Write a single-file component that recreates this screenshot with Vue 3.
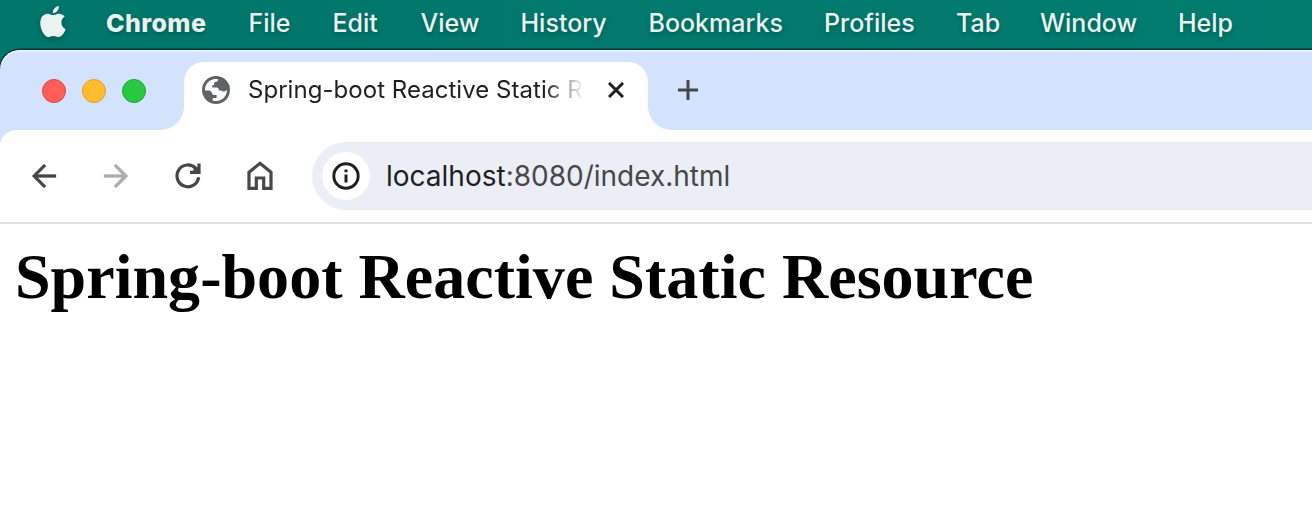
<script setup>
const menus = [
  { label: 'Chrome', width: 142.500, bold: true },
  { label: 'File', width: 84 },
  { label: 'Edit', width: 88 },
  { label: 'View', width: 100 },
  { label: 'History', width: 128 },
  { label: 'Bookmarks', width: 175.500 },
  { label: 'Profiles', width: 132 },
  { label: 'Tab', width: 84 },
  { label: 'Window', width: 138 },
  { label: 'Help', width: 70 },
]
const lights = ['red', 'yellow', 'green']
</script>

<template>
  <div class="screen">
    <header class="menubar">
      <svg class="apple" viewBox="0 0 26 32" width="26" height="32">
        <path d="M13 9.1C11.4 9.1 9.8 7.7 7.6 7.7C3.4 7.8 0.3 11.2 0.3 17C0.3 24.4 4.9 31 8.1 31C10 31 10.9 29.9 13.4 29.9C15.9 29.9 16.6 31 18.6 31C21.6 31 24.3 26.8 25.6 23.2C20.3 20.7 20 13.3 24.7 10.5C23.1 8.6 21 7.7 18.9 7.7C16.3 7.7 14.6 9.1 13 9.1Z" />
        <path d="M12.8 7.2C12.5 3.6 15.3 0.4 18.8 0C19.2 3.9 16.2 7.3 12.8 7.2Z" />
      </svg>
      <nav class="menus">
        <span
          v-for="m in menus"
          :key="m.label"
          class="menu"
          :class="{ bold: m.bold }"
          :style="{ width: m.width + 'px' }"
        >{{ m.label }}</span>
      </nav>
    </header>

    <main class="window">
      <div class="strip">
        <div class="lights">
          <i v-for="l in lights" :key="l" class="light" :class="l"></i>
        </div>
        <div class="tab">
          <svg class="globe" viewBox="0 0 28 28" width="28" height="28">
            <circle cx="14" cy="14" r="14" fill="#5f6368" />
            <path fill="#fff" d="M3 14C3 8 7.600 3.300 13.500 3L16.300 3.300C15.900 5.200 15 5.900 13.200 6C12 6.300 11.900 7.600 12.200 8.900H10.300V11.400H14.500C16.300 11.400 16.800 12.600 16.800 14.400H19.200C20.900 16.400 23.400 15.400 24.900 13.700C25 20 20.300 24.800 14.300 25C13 25 11.700 24.700 10.700 24.400V21.900H14.600V18.900H12.300C11 18.900 9.900 17.700 9.900 16.400L8 14.500H3Z" />
          </svg>
          <span class="tab-title">Spring-boot Reactive Static R</span>
          <svg class="close" viewBox="0 0 16 16" width="16" height="16">
            <path d="M1 1L15 15M15 1L1 15" />
          </svg>
        </div>
        <svg class="plus" viewBox="0 0 20 20" width="20" height="20">
          <path d="M10 0V20M0 10H20" />
        </svg>
      </div>

      <div class="toolbar">
        <svg class="icon" viewBox="0 0 24 24" width="36" height="36">
          <path fill="#474747" stroke="#474747" stroke-width="0.2" d="M20 11H7.830l5.590-5.590L12 4l-8 8 8 8 1.410-1.410L7.830 13H20v-2z" />
        </svg>
        <svg class="icon" viewBox="0 0 24 24" width="36" height="36">
          <path fill="#ababab" stroke="#ababab" stroke-width="0.2" d="M12 4l-1.410 1.410L16.170 11H4v2h12.170l-5.580 5.590L12 20l8-8z" />
        </svg>
        <svg class="icon" viewBox="0 0 36 36" width="36" height="36" fill="none" stroke="#474747" stroke-width="3.200">
          <path d="M28.700 19.300A10.900 10.900 0 1 1 25.500 10L28.600 13.500" />
          <path d="M29 5.500V14.400H20" />
          <path fill="#474747" stroke="none" d="M24 9L28 9V14H23Z" />
        </svg>
        <svg class="icon" viewBox="0 0 36 36" width="36" height="36" fill="none" stroke="#474747" stroke-width="3.200">
          <path d="M7 14.300L18 5.300L29 14.300V30.300H21.700V20H14.300V30.300H7Z" />
        </svg>
        <div class="omnibox">
          <span class="info">
            <svg viewBox="0 0 28 28" width="28" height="28">
              <circle cx="14" cy="14" r="12.200" fill="none" stroke="#1f1f1f" stroke-width="2.900" />
              <path fill="#1f1f1f" d="M12.500 7.500h3v2.800h-3zM12.500 12.500h3v8h-3z" />
            </svg>
          </span>
          <span class="url"><b>localhost</b>:8080/index.html</span>
        </div>
      </div>

      <section class="page">
        <h1>Spring-boot Reactive Static Resource</h1>
      </section>
    </main>
  </div>
</template>

<style>
body {
  margin: 0;
}
</style>

<style scoped>
.screen {
  width: 1312px;
  height: 516px;
  overflow: hidden;
  display: flex;
  flex-direction: column;
  background: linear-gradient(90deg, #01766b, #017c6d);
  font-family: Inter, sans-serif;
}
.menubar {
  height: 50px;
  flex: none;
  display: flex;
  align-items: flex-start;
  padding-left: 40px;
}
.apple {
  margin-top: 6px;
  fill: #eaf3f2;
  filter: drop-shadow(0 2px 3px rgba(0, 0, 0, 0.25));
}
.menus {
  display: flex;
  margin-left: 40px;
}
.menu {
  flex: none;
  font-size: 25px;
  line-height: 46px;
  font-weight: 500;
  color: #e8f3f1;
  white-space: nowrap;
  text-shadow: 0 2px 4px rgba(0, 0, 0, 0.25);
}
.menu.bold {
  font-weight: 800;
  letter-spacing: 0.4px;
}
.window {
  flex: 1;
  display: flex;
  flex-direction: column;
  border-radius: 20px 0 0 0;
  background: #d3e3fd;
  box-shadow: 0 0 0 1.500px #07352f, inset 0 2px 0 -0.500px #eff5ff;
}
.strip {
  height: 80px;
  flex: none;
  display: flex;
  align-items: flex-end;
}
.lights {
  width: 142px;
  height: 80px;
  padding-left: 42px;
  display: flex;
  gap: 16px;
  align-items: center;
}
.light {
  width: 24px;
  height: 24px;
  margin-top: 2px;
  box-sizing: border-box;
  border-radius: 50%;
  border: 1px solid;
}
.red {
  background: #ff5f57;
  border-color: #e0443e;
}
.yellow {
  background: #febc2e;
  border-color: #dea123;
}
.green {
  background: #28c840;
  border-color: #1aab29;
}
.tab {
  position: relative;
  width: 464px;
  height: 68px;
  box-sizing: border-box;
  padding: 0 24px 12px 18px;
  display: flex;
  align-items: center;
  background: #fff;
  border-radius: 20px 20px 0 0;
}
.tab::before,
.tab::after {
  content: '';
  position: absolute;
  bottom: 0;
  width: 24px;
  height: 24px;
}
.tab::before {
  left: -24px;
  background: radial-gradient(circle at 0 0, transparent 23.500px, #fff 24.500px);
}
.tab::after {
  right: -24px;
  background: radial-gradient(circle at 100% 0, transparent 23.500px, #fff 24.500px);
}
.globe {
  flex: none;
}
.tab-title {
  width: 336px;
  margin-left: 18px;
  font-size: 24px;
  line-height: 36px;
  letter-spacing: 0.04px;
  color: #1f1f1f;
  white-space: nowrap;
  mask-image: linear-gradient(90deg, #000 calc(100% - 40px), transparent);
}
.close {
  margin-left: auto;
  fill: none;
  stroke: #1f1f1f;
  stroke-width: 3;
}
.plus {
  margin: 0 0 30px 30px;
  fill: none;
  stroke: #474747;
  stroke-width: 3;
}
.toolbar {
  height: 92px;
  flex: none;
  display: flex;
  align-items: center;
  gap: 36px;
  padding-left: 26px;
  background: #fff;
  border-radius: 16px 0 0 0;
}
.icon {
  flex: none;
}
.omnibox {
  flex: 1;
  height: 68px;
  margin-left: -2px;
  padding-left: 10px;
  display: flex;
  align-items: center;
  background: #ebeef7;
  border-radius: 34px 0 0 34px;
}
.info {
  width: 48px;
  height: 48px;
  border-radius: 50%;
  background: #fff;
  display: flex;
  align-items: center;
  justify-content: center;
}
.url {
  margin-left: 16px;
  font-size: 28px;
  color: #474747;
}
.url b {
  font-weight: 400;
  color: #1f1f1f;
}
.page {
  flex: 1;
  background: #fff;
  border-top: 2px solid #e0e0e0;
  padding: 16px 15px;
}
h1 {
  margin: 0;
  font: bold 64px/74px 'Liberation Serif', serif;
  letter-spacing: 0.03px;
  color: #000;
  white-space: nowrap;
}
</style>
